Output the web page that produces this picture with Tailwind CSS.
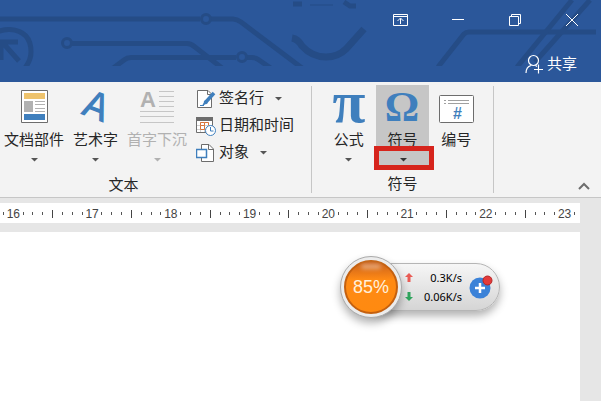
<!DOCTYPE html>
<html lang="zh-CN">
<head>
    <meta charset="UTF-8">
    <meta name="viewport" content="width=device-width, initial-scale=1.0">
    <title>文档</title>
    <script src="https://cdn.jsdelivr.net/npm/@tailwindcss/browser@4"></script>
</head>

<body class="flex flex-col min-h-screen overflow-hidden bg-[#e6e6e6] font-['Liberation_Sans','Noto_Sans_CJK_SC',sans-serif] text-[15px] text-[#262626]">
    <header class="relative h-[82px] bg-[#2b579a] text-white overflow-hidden">
        <!-- circuit pattern -->
        <svg class="absolute left-0 top-0" width="601" height="66" fill="none" stroke="#254c86" stroke-width="5">
            <path d="M0 19H200M211 19H233Q237 19 241 22L302 68"/>
            <circle cx="206" cy="19" r="4.5" stroke-width="3"/>
            <circle cx="67" cy="43" r="4.5" stroke-width="3"/>
            <path d="M72 43.5H187Q191 43.5 195 47L222 68"/>
            <path d="M112 69L124 60Q127 57.5 131 57.5H236M247 57.5H252Q256 57.5 259 60L272 69"/>
            <circle cx="242" cy="57" r="4.5" stroke-width="3"/>
            <path d="M-10 36Q0 29 10 29.5Q31 31 31 52Q31 60 25 68"/>
            <path d="M0 42H18M3 43L19 61M1 40V60"/>
            <path d="M292 38Q298 39 302 46Q312 57 326 57Q338 57 346 49L364 29" stroke-width="7"/>
            <path d="M293 4H302M344 2L350 6H356"/>
            <path d="M310 5H333" stroke-width="1"/>
            <path d="M438 67L464 34Q466 32 469 32H596"/>
            <path d="M517 67L572 0M535 62L590 0"/>
        </svg>
        <div class="relative flex justify-end h-10 pr-px">
            <button class="flex items-center justify-center w-[57px]" aria-label="功能区显示选项">
                <svg width="15" height="12" fill="none" stroke="white"><path d="M.5 .5H14.5V11.5H.5ZM.5 2.5H14.5M7.5 10V4.5M4.5 7L7.5 4L10.5 7"/></svg>
            </button>
            <button class="flex items-center justify-center w-[57px]" aria-label="最小化">
                <svg width="12" height="12" stroke="white"><path d="M0 5.5H12"/></svg>
            </button>
            <button class="flex items-center justify-center w-[57px]" aria-label="还原">
                <svg width="12" height="12" fill="none" stroke="white"><path d="M.5 2.5H9.5V11.5H.5ZM2.5 2.5V.5H11.5V9.5H9.5"/></svg>
            </button>
            <button class="flex items-center justify-center w-[57px]" aria-label="关闭">
                <svg width="12" height="12" stroke="white"><path d="M0 0L12 12M12 0L0 12"/></svg>
            </button>
        </div>
        <div class="relative flex justify-end pr-6 pt-3">
            <button class="flex items-center gap-1 leading-6">
                <svg width="18" height="20" fill="none" stroke="white" stroke-width="1.2"><circle cx="8.5" cy="6.5" r="5"/><path d="M1 19Q1 13 6 11.5M10.5 11.5L12 12.5M13.5 10.5V19.5M9 15.5H18"/></svg>
                共享
            </button>
        </div>
    </header>

    <div class="flex pt-[3px] bg-[#f3f3f3] border-b border-[#c6c6c6]">
        <section class="w-[311px] shrink-0">
            <div class="flex gap-[9px] px-1">
                <button class="flex flex-col items-center w-[60px] whitespace-nowrap">
                    <span class="flex items-center h-[43px]">
                        <svg width="27" height="33"><path d="M.5 .5H26.5V32.5H.5Z" fill="white" stroke="#6d6d6d"/><path d="M3 3H24V9H3Z" fill="#eec36d"/><path d="M3 11H12V22H3Z" fill="#b1b1b1"/><path d="M14 11.5H24M14 14.5H24M14 18.5H24M14 21.5H24" stroke="#b1b1b1"/><path d="M3 24H24V30H3Z" fill="#3f7fbd"/></svg>
                    </span>
                    <span class="leading-6">文档部件</span>
                    <svg class="mt-1" width="7" height="8"><path d="M0 2H7L3.5 5.5Z" fill="#555"/></svg>
                </button>
                <button class="flex flex-col items-center w-[45px] whitespace-nowrap">
                    <span class="flex items-center h-[43px]">
                        <svg class="overflow-visible" width="28" height="34"><text x="14" y="29" text-anchor="middle" transform="rotate(21 14 17)" class="font-['Open_Sans'] font-semibold text-[38px]" fill="#3f7fbd">A</text></svg>
                    </span>
                    <span class="leading-6">艺术字</span>
                    <svg class="mt-1" width="7" height="8"><path d="M0 2H7L3.5 5.5Z" fill="#555"/></svg>
                </button>
                <button class="flex flex-col items-center w-[60px] whitespace-nowrap text-[#b1b1b1]" disabled>
                    <span class="flex items-center h-[43px]">
                        <svg class="overflow-visible" width="34" height="34"><text x="0" y="17" class="font-bold text-[22px]" fill="#b1b1b1">A</text><path d="M19 1.5H34M19 6.5H34M19 11.5H34M19 16.5H34M0 21.5H34M0 26.5H34M0 32.5H34" stroke="#c6c6c6"/></svg>
                    </span>
                    <span class="leading-6">首字下沉</span>
                    <svg class="mt-1" width="7" height="8"><path d="M0 2H7L3.5 5.5Z" fill="#b1b1b1"/></svg>
                </button>
                <div class="flex flex-col items-start whitespace-nowrap">
                    <button class="flex items-center gap-[3px] h-[27px]">
                        <svg width="20" height="18"><path d="M1.5 .5H12L15.5 4V17.5H1.5Z" fill="white" stroke="#6d6d6d"/><path d="M11.5 .5V4.5H15.5" fill="none" stroke="#6d6d6d"/><path d="M18 3L9 13" stroke="#3f7fbd" stroke-width="3.5"/><path d="M9 10L6 16L12 13Z" fill="#3f7fbd"/><path d="M4 15.5H8" stroke="#3f7fbd"/></svg>
                        签名行
                        <svg class="ml-2" width="7" height="8"><path d="M0 2H7L3.5 5.5Z" fill="#555"/></svg>
                    </button>
                    <button class="flex items-center gap-[3px] h-[27px]">
                        <svg width="20" height="20"><path d="M.5 1.5H16.5V16.5H.5Z" fill="white" stroke="#6d6d6d"/><path d="M0 1H17V5H0Z" fill="#6d6d6d"/><path d="M4.5 6V16M8.5 6V16M12.5 6V16M1 9.5H16M1 13.5H16" stroke="#d0d0d0"/><path d="M4.5 6.500H8.500V9.500H4.500ZM8.500 6.500H12.500V9.500M4.500 9.500V13.500H8.500V9.500" fill="none" stroke="#d9743a"/><circle cx="14.5" cy="14.5" r="5" fill="white" stroke="#3f7fbd"/><path d="M14.5 11V15H17.5" fill="none" stroke="#3f7fbd"/></svg>
                        日期和时间
                    </button>
                    <button class="flex items-center gap-[3px] h-[27px]">
                        <svg width="20" height="18"><path d="M5.5 .5H13L17.5 5V17.5H5.5Z" fill="white" stroke="#6d6d6d"/><path d="M12.5 .5V5.5H17.5" fill="none" stroke="#6d6d6d"/><path d="M.5 5.5H10.5V13.5H.5Z" fill="white" stroke="#3f7fbd" stroke-width="1.5"/></svg>
                        对象
                        <svg class="ml-2" width="7" height="8"><path d="M0 2H7L3.5 5.5Z" fill="#555"/></svg>
                    </button>
                </div>
            </div>
            <h2 class="pr-16 mt-[7px] leading-6 text-center">文本</h2>
        </section>
        <div class="w-px mt-px mb-1 bg-[#c6c6c6]"></div>
        <section class="w-[181px] shrink-0">
            <div class="flex px-[10px]">
                <button class="flex flex-col items-center w-[54px] whitespace-nowrap">
                    <span class="flex items-center h-[43px]">
                        <svg class="overflow-visible" width="32" height="34"><text x="16" y="32" text-anchor="middle" class="font-['Liberation_Serif'] font-bold text-[60px]" fill="#3f7fbd">π</text></svg>
                    </span>
                    <span class="leading-6">公式</span>
                    <svg class="mt-1" width="7" height="8"><path d="M0 2H7L3.5 5.5Z" fill="#555"/></svg>
                </button>
                <button class="relative flex flex-col items-center w-[54px] h-[82px] bg-[#c6c6c6] whitespace-nowrap">
                    <span class="flex items-center h-[43px]">
                        <svg class="overflow-visible" width="32" height="34"><text x="15" y="31" text-anchor="middle" class="font-['Liberation_Serif'] font-bold text-[43px]" fill="#3f7fbd">Ω</text></svg>
                    </span>
                    <span class="leading-6">符号</span>
                    <span class="absolute -left-[2px] top-[61px] flex items-center justify-center w-[60px] h-6 border-[5px] border-[#d6241c] bg-[#c6c6c6]">
                        <svg class="mt-1" width="7" height="8"><path d="M0 2H7L3.5 5.5Z" fill="#333"/></svg>
                    </span>
                </button>
                <button class="flex flex-col items-center w-[54px] whitespace-nowrap">
                    <span class="flex items-end h-[43px] pb-[5px]">
                        <svg width="35" height="28"><rect x=".5" y=".5" width="34" height="27" rx="1" fill="white" stroke="#6d6d6d"/><path d="M5 5.5H7M9 5.5H30M5 8.5H7M9 8.5H30" stroke="#a0a0a0"/><text x="14" y="24" class="font-bold text-[16px]" fill="#3f7fbd">#</text></svg>
                    </span>
                    <span class="leading-6">编号</span>
                </button>
            </div>
            <h2 class="mt-[5px] leading-6 text-center">符号</h2>
        </section>
        <div class="w-px mt-px mb-1 bg-[#c6c6c6]"></div>
        <button class="self-end ml-auto mr-[7px] mb-px p-1" aria-label="折叠功能区">
            <svg width="12" height="10" fill="none" stroke="#6d6d6d" stroke-width="2"><path d="M1 7L6 2L11 7"/></svg>
        </button>
    </div>

    <main class="relative flex flex-col flex-1 mt-[5px] mr-[21px]">
        <div class="h-5 bg-white overflow-hidden">
            <div id="ruler" class="flex h-full pt-px -ml-[31px] -mr-[19px] text-xs"></div>
        </div>
        <div class="flex-1 mt-[9px] bg-white"></div>

        <!-- floating net speed ball -->
        <aside class="absolute left-[340px] top-[53px] flex items-center h-[62px] text-black">
            <div class="absolute left-5 right-0 top-[7px] h-12 rounded-full border border-[#b5b5b5] bg-linear-to-b from-[#f6f6f6] to-[#d5d5d5] shadow-[0_5px_9px_rgba(0,0,0,0.3)]"></div>
            <div class="relative w-[62px] h-[62px] p-[3px] rounded-full border border-[#aaa] bg-[#ececec] shadow-[0_5px_9px_rgba(0,0,0,0.3)]">
                <div class="flex items-center justify-center w-full h-full rounded-full border-2 border-[#c4600f] bg-linear-to-b from-[#c9601a] via-[#ff8a14] via-35% to-[#ff8a10] text-[18px] text-[#fff0dc]">85%</div>
                <div class="absolute left-5 top-[7px] w-5 h-[5px] rounded-full bg-white/40 blur-[2px]"></div>
            </div>
            <div class="relative flex flex-col gap-[3px] w-[59px] mr-px ml-px font-['Noto_Sans'] text-[11px] leading-4">
                <div class="flex items-center justify-between">
                    <svg class="ml-[2px]" width="8" height="9"><path d="M4 0L8 4H5.5V9H2.5V4H0Z" fill="#e95b54"/></svg>
                    0.3K/s
                </div>
                <div class="flex items-center justify-between">
                    <svg class="ml-[2px]" width="8" height="9"><path d="M4 9L8 5H5.5V0H2.5V5H0Z" fill="#2fa35c"/></svg>
                    0.06K/s
                </div>
            </div>
            <button class="relative ml-[6px] mr-[7px]" aria-label="加速">
                <svg width="24" height="24"><circle cx="11" cy="13" r="10.5" fill="#3b82d8"/><path d="M11 8V18M6 13H16" stroke="white" stroke-width="2.5"/><circle cx="18.5" cy="5.5" r="4.5" fill="#e43a3a" stroke="#b32525"/></svg>
            </button>
        </aside>
    </main>

    <script>
        const small = '<i class="flex-1 flex justify-center items-center"><b class="w-px h-[3px] bg-[#555]"></b></i>';
        const tall = '<i class="flex-1 flex justify-center items-center"><b class="w-px h-2 bg-[#444]"></b></i>';
        let html = "";
        for (let n = 16; n <= 23; n++) {
            const label = '<span class="flex-1 min-w-0 flex justify-center items-center text-[#444]">' + n + '</span>';
            html += '<div class="flex flex-1">' + tall + small.repeat(3) + label + small.repeat(3) + '</div>';
        }
        document.getElementById("ruler").innerHTML = html;
    </script>
</body>
</html>
